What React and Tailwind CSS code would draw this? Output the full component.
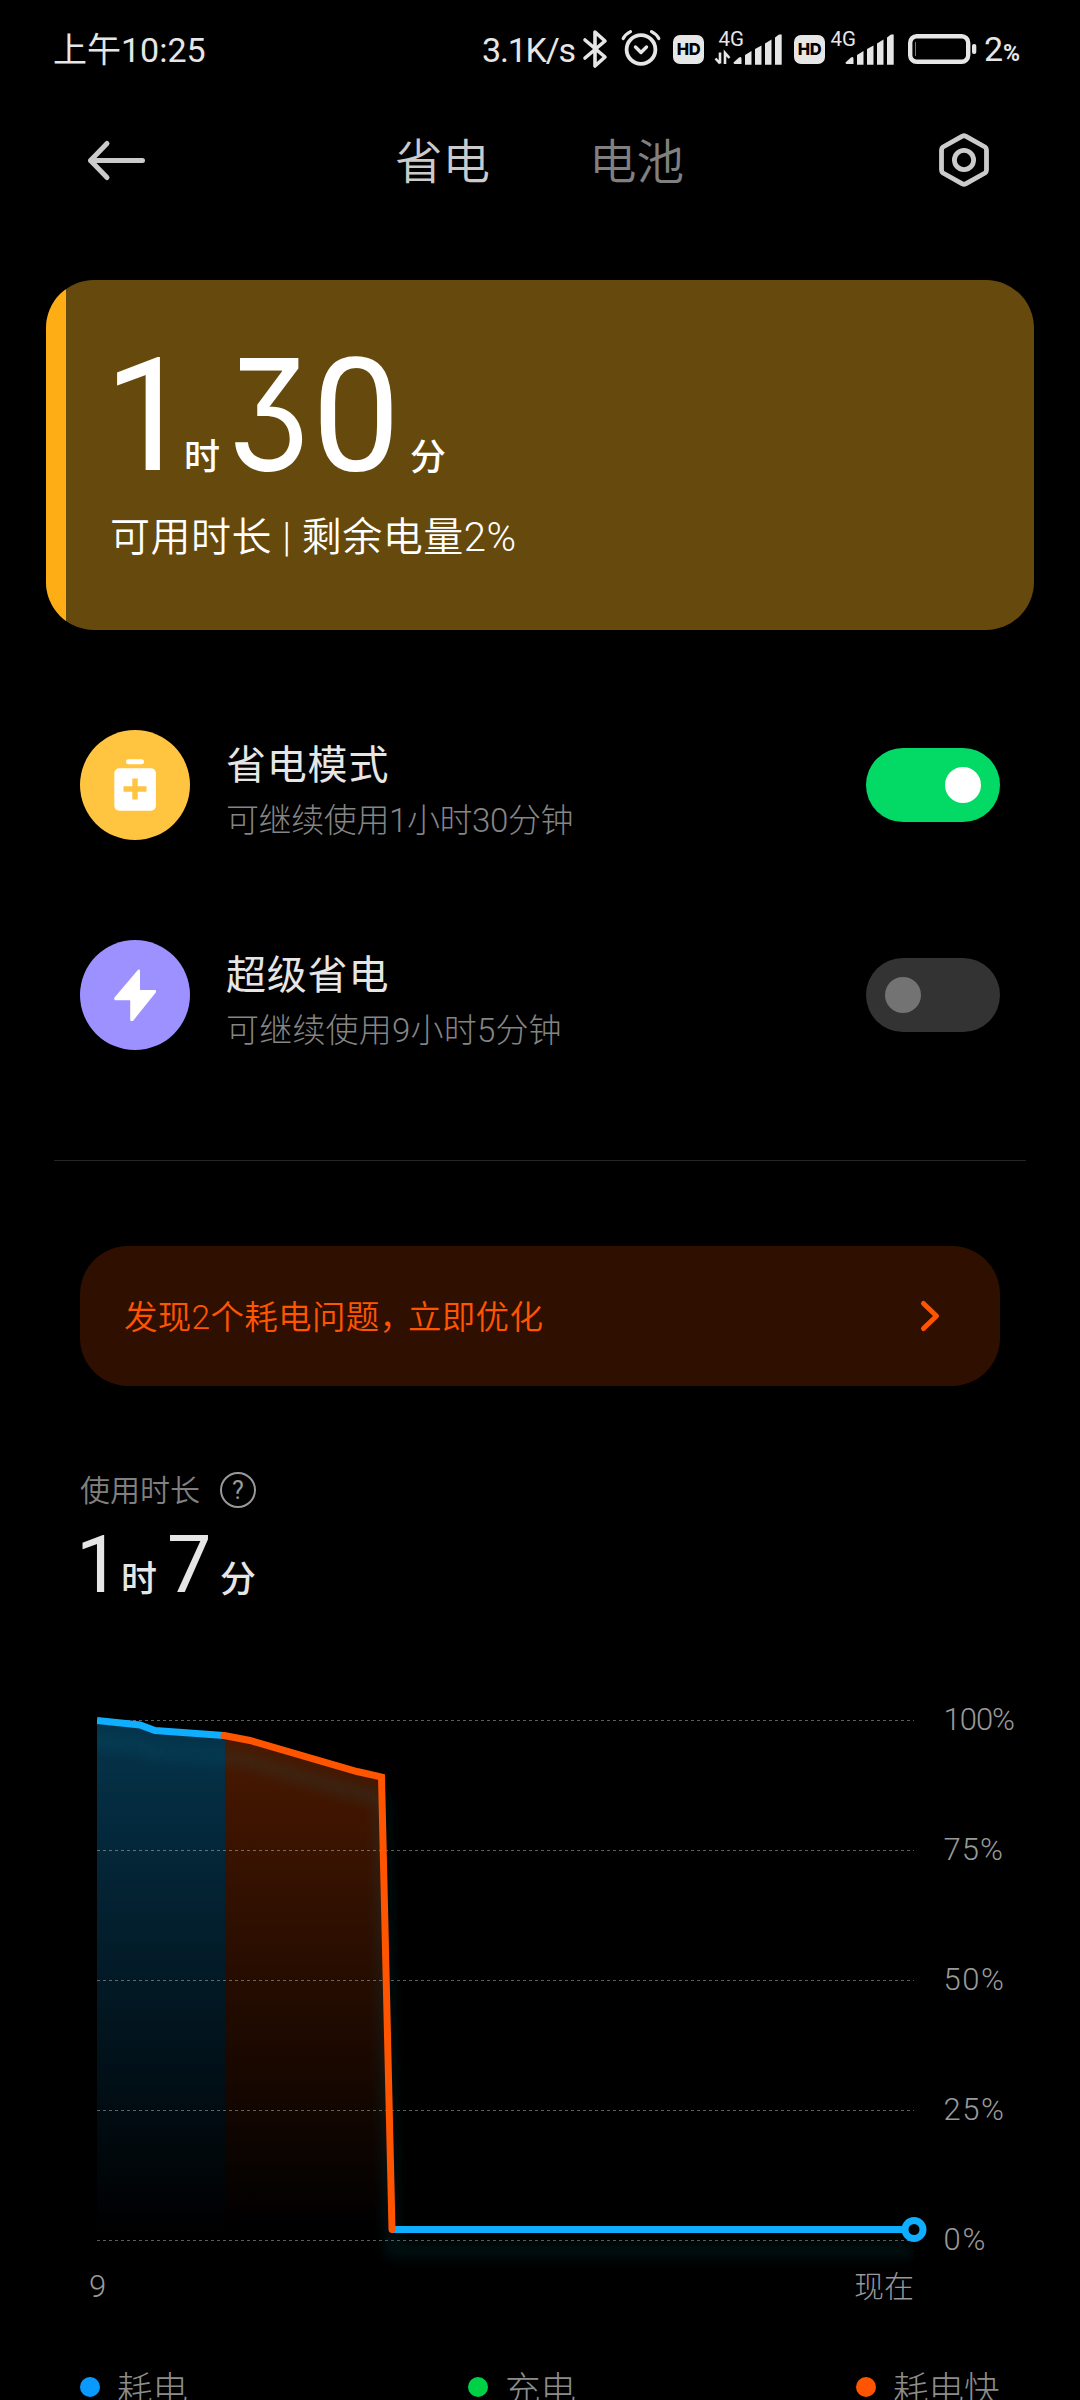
const FONT = "font-['Roboto','Noto_Sans_CJK_SC',sans-serif]";

function Bluetooth() {
  return (
    <svg className="h-[40px] w-[26px] shrink-0" viewBox="0 0 26 40" fill="none" stroke="#e6e6e6" strokeWidth="3.6" strokeLinejoin="round" strokeLinecap="round">
      <path d="M3 11 L23 28 L13 37 V3 L23 12 L3 29" />
    </svg>
  );
}

function Alarm() {
  return (
    <svg className="h-[40px] w-[40px] shrink-0" viewBox="0 0 40 40" fill="none" stroke="#e6e6e6" strokeLinecap="round" strokeLinejoin="round">
      <circle cx="20" cy="21.5" r="14.4" strokeWidth="3.8" />
      <path d="M14.5 19 L20 24.5 L25.5 19" strokeWidth="3.4" />
      <path d="M2.2 10.5 Q4.5 6 9.5 3.6 M37.8 10.5 Q35.5 6 30.5 3.6" strokeWidth="3.2" />
    </svg>
  );
}

function HdBadge() {
  return (
    <div className="flex h-[29px] w-[31px] shrink-0 items-center justify-center rounded-[7px] bg-[#e6e6e6] font-['Inter',sans-serif] text-[16.5px] leading-none font-extrabold tracking-[-0.5px] text-black">
      HD
    </div>
  );
}

function Signal({ arrows }) {
  return (
    <svg className="h-[40px] w-[70px] shrink-0 overflow-visible" viewBox="0 0 70 40">
      <text x="4.5" y="16.5" fontSize="20.5" fill="#e6e6e6" className={FONT}>4G</text>
      {arrows && (
        <path d="M1.5 29.5 L6 34.5 M6 23.5 V34.5 M11 35 V24 L15.5 29" fill="none" stroke="#e6e6e6" strokeWidth="2.6" />
      )}
      <g fill="#e6e6e6">
        <path d="M19.5 33.5 L25 28.5 Q27.5 27 27.5 30 V35 H21 Q19.5 35 19.5 33.5Z" />
        <path d="M31 26 L37.5 22 V35.7 H31Z" />
        <path d="M41 20 L47.5 16.5 V35.7 H41Z" />
        <path d="M51 14.5 L57.5 10.5 V35.7 H51Z" />
        <path d="M61 8.5 L65 5.5 H67.7 V35.7 H61Z" />
      </g>
    </svg>
  );
}

function StatusBar() {
  return (
    <div className="flex h-[98px] items-center text-[34px] leading-none whitespace-nowrap text-[#e6e6e6]">
      <div className="ml-[53px] w-[429px] pt-[2px]">上午10:25</div>
      <div className="w-[98px] pt-[2px] tracking-[-1.2px]">3.1K/s</div>
      <div className="ml-[2px]"><Bluetooth /></div>
      <div className="ml-[13px] -translate-y-px"><Alarm /></div>
      <div className="ml-[12px]"><HdBadge /></div>
      <div className="ml-[10px]"><Signal arrows /></div>
      <div className="ml-[10px]"><HdBadge /></div>
      <div className="ml-[1px]"><Signal /></div>
      <svg className="ml-[12px] h-[30px] w-[70px] shrink-0" viewBox="0 0 70 30">
        <rect x="2.2" y="2.2" width="58" height="25.6" rx="6.5" fill="none" stroke="#e6e6e6" strokeWidth="4.4" />
        <path d="M7.5 8 V22" stroke="#b0653a" strokeWidth="1" />
        <rect x="64" y="10" width="4.3" height="10" rx="2" fill="#e6e6e6" />
      </svg>
      <div className="ml-[6px] flex items-baseline">
        <span>2</span>
        <span className="text-[23px] font-bold">%</span>
      </div>
    </div>
  );
}

function Header() {
  return (
    <div className="flex h-[124px] items-center text-[47.5px] leading-none font-[350]">
      <svg className="ml-[85px] h-[48px] w-[64px]" viewBox="0 0 64 48" fill="none" stroke="#cbcbcb" strokeWidth="5" strokeLinecap="round" strokeLinejoin="round">
        <path d="M57.5 24.5 H5.5 M22 7.5 L5.5 24.5 L22 41.5" />
      </svg>
      <div className="ml-[246px] w-[97px] pt-[7px] text-[#cbcbcb]">省电</div>
      <div className="ml-[97px] w-[97px] pt-[7px] text-[#808080]">电池</div>
      <svg className="ml-[252px] h-[56px] w-[52px]" viewBox="0 0 52 56" fill="none" stroke="#cbcbcb" strokeWidth="4.8" strokeLinejoin="round">
        <path d="M24.4 4.2 Q26 3.2 27.6 4.2 L47 15 Q48.5 16 48.5 18 V38 Q48.5 40 47 41 L27.6 51.8 Q26 52.8 24.4 51.8 L5 41 Q3.5 40 3.5 38 V18 Q3.5 16 5 15 Z" />
        <circle cx="26" cy="28" r="9.6" />
      </svg>
    </div>
  );
}

function RemainingCard() {
  return (
    <div className="mx-[46px] mt-[58px] flex h-[350px] overflow-hidden rounded-[48px] bg-[#66490c] text-white">
      <div className="w-[20px] bg-[#ffad14]" />
      <div className="ml-[44px]">
        <div className="mt-[64px] flex h-[140px] items-baseline text-[157px] leading-[140px] font-[440] whitespace-nowrap">
          <span className="-ml-[6px] w-[78px] tracking-[-12px]">1</span>
          <span className="ml-[2px] w-[43px] text-[36px] font-medium">时</span>
          <span className="w-[85px] font-['Inter',sans-serif] text-[154px] [font-feature-settings:'cv09']">
            <span className="inline-block w-[83px] origin-left scale-x-[0.87]">3</span>
          </span>
          <span className="w-[98px]">0</span>
          <span className="text-[36px] font-medium">分</span>
        </div>
        <div className="mt-[32px] text-[40px] leading-[44px] font-[350] tracking-[0.5px] whitespace-nowrap">可用时长 | 剩余电量2%</div>
      </div>
    </div>
  );
}

function Toggle({ on }) {
  return (
    <div className={on ? "flex h-[74px] w-[134px] items-center justify-end rounded-full bg-[#03da66] px-[19px]" : "flex h-[74px] w-[134px] items-center rounded-full bg-[#333333] px-[19px]"}>
      <div className={on ? "size-[36px] rounded-full bg-white" : "size-[36px] rounded-full bg-[#737373]"} />
    </div>
  );
}

function ModeRow({ icon, title, subtitle, on }) {
  return (
    <div className="mx-[80px] mt-[100px] flex h-[110px] items-center">
      {icon}
      <div className="ml-[36px] flex-1 pt-[15px] whitespace-nowrap">
        <div className="text-[40px] leading-[56px] tracking-[0.8px] text-[#e6e6e6]">{title}</div>
        <div className={on ? "text-[33px] leading-[54px] font-light tracking-[-0.4px] text-[#858585]" : "text-[33px] leading-[54px] font-light tracking-[0.2px] text-[#858585]"}>{subtitle}</div>
      </div>
      <Toggle on={on} />
    </div>
  );
}

const batteryIcon = (
  <svg className="size-[110px]" viewBox="0 0 110 110">
    <circle cx="55" cy="55" r="55" fill="#ffc440" />
    <rect x="46" y="29.2" width="18" height="5" rx="2.5" fill="#fff" />
    <rect x="34.3" y="38.3" width="41.6" height="42.5" rx="5" fill="#fff" />
    <path d="M43.5 59 H66.5 M55 48.5 V69.5" stroke="#ffc440" strokeWidth="5.4" />
  </svg>
);

const boltIcon = (
  <svg className="size-[110px]" viewBox="0 0 110 110">
    <circle cx="55" cy="55" r="55" fill="#9d91ff" />
    <path d="M58.6 30.6 L35.3 58.2 V59.2 H51.2 V80 L52.4 80 L75 51.8 V51 H59 V30.6 Z" fill="#fff" stroke="#fff" strokeWidth="2" strokeLinejoin="round" />
  </svg>
);

function Alert() {
  return (
    <div className="mx-[80px] mt-[85px] flex h-[140px] items-center justify-between rounded-[48px] bg-[#2e0f00] pr-[59px] pl-[44px] text-[33.5px] leading-none font-[350] whitespace-nowrap text-[#ff5500]">
      <span className="pt-[4px] tracking-[0.3px]">
        发现2个耗电问题<span className="tracking-[-5px]">，</span>立即优化
      </span>
      <svg className="h-[36px] w-[22px]" viewBox="0 0 22 36" fill="none" stroke="#ff5500" strokeWidth="5" strokeLinecap="round" strokeLinejoin="round">
        <path d="M4.5 5.5 L17.5 18 L4.5 30.5" />
      </svg>
    </div>
  );
}

function Usage() {
  return (
    <div className="mt-[86px] ml-[80px] text-[#e6e6e6]">
      <div className="flex h-[36px] items-center text-[30px] leading-none text-[#808080]">
        <span className="w-[140px] pt-[2px] font-[350]">使用时长</span>
        <span className="flex size-[36px] items-center justify-center rounded-full border-[2.5px] border-[#999999] text-[25px] leading-none text-[#999999]">?</span>
      </div>
      <div className="mt-[17px] flex h-[80px] items-baseline text-[79px] leading-[80px] whitespace-nowrap">
        <span className="-ml-[4px] w-[45px]">1</span>
        <span className="w-[46px] text-[36px] font-medium">时</span>
        <span className="w-[53px]">7</span>
        <span className="text-[36px] font-medium">分</span>
      </div>
    </div>
  );
}

const LEVELS = [
  { label: "100%", width: 71.5 },
  { label: "75%", width: 59.5 },
  { label: "50%", width: 60.5 },
  { label: "25%", width: 60.5 },
  { label: "0%", width: 42 },
];
const BLUE_START = "M97 30.5 L140 35 L155 40.5 L224 45.5";
const DROP = "M224 45.5 L250 50.5 L357 81.5 L381.5 87 L392 539.5";
const FLAT = "M392 539.5 H914";

function Chart() {
  return (
    <svg className="mt-[85px] block h-[640px] w-[1080px]" viewBox="0 0 1080 640">
      <defs>
        <linearGradient id="blueFill" gradientUnits="userSpaceOnUse" x1="0" y1="30" x2="0" y2="540">
          <stop offset="0" stopColor="#10aeff" stopOpacity="0.3" />
          <stop offset="1" stopColor="#10aeff" stopOpacity="0" />
        </linearGradient>
        <linearGradient id="orangeFill" gradientUnits="userSpaceOnUse" x1="0" y1="30" x2="0" y2="540">
          <stop offset="0" stopColor="#ff5500" stopOpacity="0.3" />
          <stop offset="1" stopColor="#ff5500" stopOpacity="0" />
        </linearGradient>
        <filter id="glow" filterUnits="userSpaceOnUse" x="60" y="0" width="900" height="640">
          <feGaussianBlur stdDeviation="7" />
        </filter>
        <clipPath id="plot">
          <rect x="97" y="0" width="817" height="640" />
        </clipPath>
      </defs>
      <path d="M97 30.5 L140 35 L155 40.5 L225.500 45.5 V540 H97 Z" fill="url(#blueFill)" />
      <path d="M225.500 45.5 L250 50.5 L357 81.5 L381.5 87 L392 540 H225.500 Z" fill="url(#orangeFill)" />
      {LEVELS.map(({ label, width }, i) => (
        <g key={label}>
          <path d="M97 0 H914" transform={`translate(0 ${30.5 + i * 130})`} stroke="#ffffff" strokeOpacity="0.36" strokeDasharray="3 3" />
          <text x="943.500" y={39.5 + i * 130} fontSize="31" fontWeight="300" fill="#999999" textLength={width} className={FONT}>{label}</text>
        </g>
      ))}
      <g clipPath="url(#plot)">
        <path d="M90 30 L140 35 L155 40.5 L224 45.5 L250 50.5 L357 81.5 L381.5 87 L392 539.5 H914" transform="translate(0 21)" fill="none" stroke="#1c8090" strokeOpacity="0.18" strokeWidth="10" filter="url(#glow)" />
        <g fill="none" strokeWidth="7">
          <path d={FLAT} stroke="#10aeff" />
          <path d={BLUE_START} stroke="#10aeff" />
          <path d={DROP} stroke="#ff5500" strokeLinecap="round" />
        </g>
      </g>
      <circle cx="914" cy="539.5" r="9" fill="#000000" stroke="#10aeff" strokeWidth="7" />
      <g fontSize="30" fontWeight="300" fill="#999999" className={FONT}>
        <text x="89" y="607" fontSize="31">9</text>
        <text x="854" y="607">现在</text>
      </g>
    </svg>
  );
}

function Legend() {
  return (
    <div className="ml-[80px] flex h-[50px] items-center text-[35.5px] leading-[50px] font-light whitespace-nowrap text-[#8c8c8c]">
      <i className="mt-[-2px] size-[20px] rounded-full bg-[#0a99ff]" />
      <span className="ml-[17px] w-[351px] pt-[4px]">耗电</span>
      <i className="mt-[-2px] size-[20px] rounded-full bg-[#00d045]" />
      <span className="ml-[17px] w-[351px] pt-[4px]">充电</span>
      <i className="mt-[-2px] size-[20px] rounded-full bg-[#ff5500]" />
      <span className="ml-[17px] pt-[4px]">耗电快</span>
    </div>
  );
}

export default function App() {
  return (
    <div className="h-[2400px] w-[1080px] overflow-hidden bg-black font-['Roboto','Noto_Sans_CJK_SC',sans-serif]">
      <StatusBar />
      <Header />
      <RemainingCard />
      <ModeRow icon={batteryIcon} title="省电模式" subtitle="可继续使用1小时30分钟" on />
      <ModeRow icon={boltIcon} title="超级省电" subtitle="可继续使用9小时5分钟" />
      <div className="mx-[54px] mt-[110px] h-px bg-[#262626]" />
      <Alert />
      <Usage />
      <Chart />
      <div className="mt-[33px]">
        <Legend />
      </div>
    </div>
  );
}
